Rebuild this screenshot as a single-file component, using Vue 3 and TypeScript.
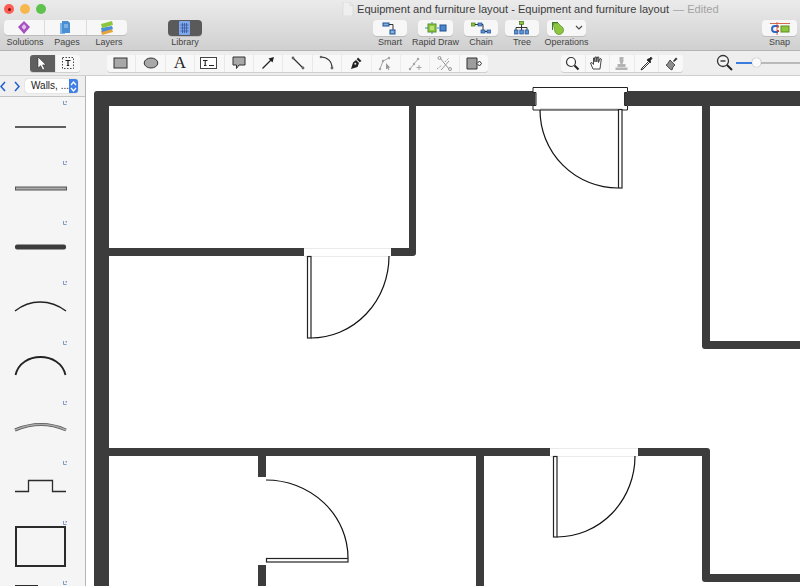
<script setup lang="ts">
const tileIndexes: number[] = [0, 1, 2, 3, 4, 5, 6, 7, 8]
</script>

<template>
  <div class="app">
    <header class="head">
      <div class="lights">
        <span class="light red"><i></i></span>
        <span class="light yellow"></span>
        <span class="light green"></span>
      </div>
      <div class="title">
        <svg class="doc" width="12" height="14" viewBox="0 0 12 14"><path d="M1 0h7l3 3.500V14H1z" fill="#efefef" stroke="#d4d4d4" stroke-width=".6" /><path d="M8 0v3.500h3" fill="none" stroke="#d4d4d4" stroke-width=".6" /></svg>
        <span>Equipment and furniture layout - Equipment and furniture layout</span>
        <span class="edited">— Edited</span>
      </div>
      <div class="tools">
        <div class="seg-wrap">
          <div class="seg">
            <span class="seg-btn">
              <svg width="18" height="14" viewBox="0 0 18 14"><path d="M9 0l6 6-6 7-6-7z" fill="#a64fc0" /><path d="M9 3l2.500 3-2.500 3-2.500-3z" fill="#e3c4ec" /></svg>
            </span>
            <span class="seg-btn">
              <svg width="16" height="16" viewBox="0 0 16 16"><path d="M3 3h5v11H3z" fill="#7eb6e8" /><path d="M5 1h6l2 2v10H5z" fill="#4a8fd4" /><path d="M7 5h4M7 7h4" stroke="#cfe4f7" stroke-width=".8" /></svg>
            </span>
            <span class="seg-btn">
              <svg width="18" height="16" viewBox="0 0 18 16"><path d="M3 11l11-2 1 3-11 3z" fill="#e8a33b" /><path d="M3 8l11-2 1 3-11 3z" fill="#4c8fd8" /><path d="M3 4l11-3 1 4-11 3z" fill="#8cc63f" /></svg>
            </span>
          </div>
          <div class="seg-labels"><span>Solutions</span><span>Pages</span><span>Layers</span></div>
        </div>

        <div class="tool library">
          <span class="btn dark">
            <svg width="12" height="14" viewBox="0 0 12 14"><rect width="11" height="14" rx="1" fill="#7fa8ec" /><path d="M1.500 4h8M1.500 7h8M1.500 10h8M3.500 2v10M5.500 2v10M7.500 2v10" stroke="#3e5fa6" stroke-width=".9" /></svg>
          </span>
          <label>Library</label>
        </div>

        <div class="tool smart">
          <span class="btn">
            <svg width="16" height="13" viewBox="0 0 16 13"><rect x="1" y="1" width="6" height="3" fill="#7fb2e0" stroke="#1f4f8f" /><path d="M7 2.500h4v6" fill="none" stroke="#333" /><rect x="8" y="8" width="5" height="4" fill="#7fb2e0" stroke="#1f4f8f" /></svg>
          </span>
          <label>Smart</label>
        </div>
        <div class="tool rapid">
          <span class="btn">
            <svg width="22" height="12" viewBox="0 0 22 12"><path d="M0 6h3M12 6h2" stroke="#2e8bc9" /><rect x="3" y="2" width="8" height="8" fill="#8cc63f" stroke="#5c8f22" /><rect x="5" y="4" width="4" height="4" fill="#b9e07a" /><path d="M7 0v2M7 10v2" stroke="#2e8bc9" /><rect x="15" y="3" width="6" height="6" fill="#4a86d0" stroke="#1f4f8f" /></svg>
          </span>
          <label>Rapid Draw</label>
        </div>
        <div class="tool chain">
          <span class="btn">
            <svg width="20" height="13" viewBox="0 0 20 13"><rect x="0" y="1" width="4" height="3" fill="#8cc63f" stroke="#44701a" stroke-width=".7" /><path d="M4 2.500h4M10 2.500h2v7" fill="none" stroke="#333" /><rect x="7" y="1" width="4" height="3" fill="#5b93d8" stroke="#1f4f8f" stroke-width=".7" /><rect x="10" y="8" width="4" height="3" fill="#5b93d8" stroke="#1f4f8f" stroke-width=".7" /><path d="M14 9.500h2" stroke="#333" /><rect x="16" y="8" width="4" height="3" fill="#5b93d8" stroke="#1f4f8f" stroke-width=".7" /></svg>
          </span>
          <label>Chain</label>
        </div>
        <div class="tool tree">
          <span class="btn">
            <svg width="16" height="14" viewBox="0 0 16 14"><rect x="5.500" y="0.500" width="4" height="3" fill="#8cc63f" stroke="#44701a" stroke-width=".7" /><path d="M7.500 3.500v3M2 9V6.500h11V9M7.500 6.500V9" fill="none" stroke="#333" /><rect x="0.500" y="9" width="3.500" height="4" fill="#5b93d8" stroke="#1f4f8f" stroke-width=".7" /><rect x="5.800" y="9" width="3.500" height="4" fill="#5b93d8" stroke="#1f4f8f" stroke-width=".7" /><rect x="11" y="9" width="3.500" height="4" fill="#5b93d8" stroke="#1f4f8f" stroke-width=".7" /></svg>
          </span>
          <label>Tree</label>
        </div>
        <div class="tool ops">
          <span class="btn">
            <svg width="34" height="14" viewBox="0 0 34 14"><path d="M2 1h6v3H3v5H2z" fill="#3d7a2c" /><path d="M3 2h5l3 3a4.500 4.500 0 1 1-6 6z" fill="#8cc63f" stroke="#4f7f22" stroke-width=".6" /><path d="M26 5l3 3 3-3" fill="none" stroke="#444" stroke-width="1.100" /></svg>
          </span>
          <label>Operations</label>
        </div>
        <div class="tool snap">
          <span class="btn">
            <svg width="20" height="13" viewBox="0 0 20 13"><path d="M0 1.500h20" stroke="#d9654a" /><path d="M7 0v13" stroke="#d9654a" /><path d="M8 4H5a2.500 2.500 0 0 0 0 6h3" fill="none" stroke="#2f68c4" stroke-width="2" /><path d="M8 3.500v2M8 8v2" stroke="#d43b2b" stroke-width="2" /><rect x="11" y="4" width="8" height="6" fill="#8cc63f" stroke="#5c8f22" /></svg>
          </span>
          <label>Snap</label>
        </div>
      </div>
    </header>

    <div class="bar">
      <div class="group select">
        <span class="cell on">
          <svg width="12" height="15" viewBox="0 0 12 15"><path d="M2 1v11l2.700-2.300 2.100 4.300 1.900-.9-2.100-4.200H10z" fill="#fff" stroke="#222" stroke-width=".5" /></svg>
        </span>
        <span class="cell">
          <svg width="14" height="14" viewBox="0 0 14 14"><rect x="1.500" y="1.500" width="11" height="11" fill="none" stroke="#444" stroke-dasharray="1.500 1.500" /><path d="M4.500 4.500h5M7 4.500v5M5.800 9.500h2.400" fill="none" stroke="#222" stroke-width="1.200" /></svg>
        </span>
      </div>

      <div class="group shapes">
        <span class="cell"><svg width="16" height="12" viewBox="0 0 16 12"><rect x="1" y="1" width="13" height="10" fill="#a8a8a8" stroke="#333" /></svg></span>
        <span class="cell"><svg width="16" height="12" viewBox="0 0 16 12"><ellipse cx="8" cy="6" rx="6.800" ry="5" fill="#a8a8a8" stroke="#333" /></svg></span>
        <span class="cell letter">A</span>
        <span class="cell"><svg width="18" height="12" viewBox="0 0 18 12"><rect x=".5" y=".5" width="16" height="11" fill="#fff" stroke="#444" /><path d="M3 3.500h4.500M5.200 3.500v5M4 8.500h2.500M9 8.500h5" fill="none" stroke="#222" stroke-width="1.100" /></svg></span>
        <span class="cell"><svg width="14" height="14" viewBox="0 0 14 14"><path d="M1 1h12v8H7l-2.500 3.500V9H1z" fill="#a8a8a8" stroke="#333" /></svg></span>
        <span class="cell"><svg width="14" height="14" viewBox="0 0 14 14"><path d="M1.500 12.500L11 3" stroke="#222" stroke-width="1.300" /><path d="M13 1l-1.500 5.500L7.500 2.500z" fill="#222" /></svg></span>
        <span class="cell"><svg width="14" height="14" viewBox="0 0 14 14"><path d="M2 2l10 10" stroke="#333" stroke-width="1.200" /><circle cx="2" cy="2" r="1.400" fill="#666" /><circle cx="12" cy="12" r="1.400" fill="#666" /></svg></span>
        <span class="cell"><svg width="16" height="16" viewBox="0 0 16 16"><path d="M2 2c6 0 11 4 11 11" fill="none" stroke="#333" stroke-width="1.200" /><circle cx="2" cy="2" r="1.300" fill="#666" /><circle cx="13" cy="13" r="1.400" fill="#666" /></svg></span>
        <span class="cell"><svg width="14" height="14" viewBox="0 0 14 14"><path d="M9 1.500l3.500 3.500-1.800 1.300L7.700 3.300z" fill="#222" /><path d="M7 4l3 3-1.500 4L2 13l2-6.500z" fill="#222" /><circle cx="6.300" cy="7.700" r="1" fill="#eee" /></svg></span>
        <span class="cell faded"><svg width="15" height="15" viewBox="0 0 15 15"><path d="M2 13L5 5l6-3" fill="none" stroke="#888" /><circle cx="2" cy="13" r="1.200" fill="#888" /><circle cx="5" cy="5" r="1.200" fill="#888" /><circle cx="11" cy="2" r="1.200" fill="#888" /><path d="M8 7v6.500l1.500-1.300 1 2 .9-.4-1-2h2z" fill="#777" /></svg></span>
        <span class="cell faded"><svg width="15" height="15" viewBox="0 0 15 15"><path d="M2 13L10 3" stroke="#888" /><circle cx="2" cy="13" r="1.200" fill="#888" /><circle cx="6" cy="8" r="1.200" fill="#888" /><circle cx="10" cy="3" r="1.200" fill="#888" /><path d="M11 9v5M8.500 11.500h5" stroke="#888" /></svg></span>
        <span class="cell faded"><svg width="17" height="15" viewBox="0 0 17 15"><path d="M1 13l5-4M9 6l4-4" stroke="#888" stroke-dasharray="2 1" /><path d="M4 2l9 11M13 5L5 14" stroke="#777" /><circle cx="3.500" cy="2" r="1.500" fill="none" stroke="#777" /><circle cx="14" cy="13" r="1.500" fill="none" stroke="#777" /></svg></span>
        <span class="cell"><svg width="16" height="13" viewBox="0 0 16 13"><path d="M1 1h10v11H1z" fill="#9d9d9d" stroke="#333" /><path d="M11 6.500l2.500-2.500 2 2.500-2 2.500z" fill="#f2f2f2" stroke="#333" /></svg></span>
      </div>

      <div class="group view">
        <span class="cell"><svg width="15" height="15" viewBox="0 0 15 15"><circle cx="6" cy="6" r="4.500" fill="#fff" stroke="#333" stroke-width="1.200" /><path d="M9.500 9.500l4 4" stroke="#222" stroke-width="2" /></svg></span>
        <span class="cell"><svg width="16" height="16" viewBox="0 0 16 16"><path d="M4 14L1.500 8l1.500-.5 1.500 2V3l1 0 .5 4V2h1.500l.3 5 .7-5h1.300l-.3 5.500L11 3.500l1.300.5-.8 6L11 14z" fill="#fff" stroke="#333" stroke-width=".9" /></svg></span>
        <span class="cell faded"><svg width="15" height="15" viewBox="0 0 15 15"><path d="M5.500 1h4v4l-1 3h3v3h-8V8h3l-1-3z" fill="#9d9d9d" /><rect x="1.500" y="11.500" width="12" height="2.500" fill="#9d9d9d" /></svg></span>
        <span class="cell"><svg width="15" height="15" viewBox="0 0 15 15"><path d="M9 6L3 12l-1 2 2-1 6-6" fill="#eee" stroke="#333" /><path d="M8 4l3 3 1-1-1-1 2-2.500L12 1 10 3 9 2.800z" fill="#222" stroke="#222" stroke-width=".7" /></svg></span>
        <span class="cell"><svg width="15" height="15" viewBox="0 0 15 15"><path d="M9 5l3-3.500 1.500 1.500L10 6z" fill="#333" /><path d="M6 4l5 5-2 2-1 3-2-1-4-4 2-1.500L4 7z" fill="#8d8d8d" stroke="#222" stroke-width=".7" /></svg></span>
      </div>

      <div class="zoom">
        <svg width="18" height="18" viewBox="0 0 18 18"><circle cx="7" cy="7" r="5.500" fill="#f4f4f4" stroke="#333" stroke-width="1.300" /><path d="M4.500 7h5" stroke="#222" stroke-width="1.300" /><path d="M11 11l5 5" stroke="#222" stroke-width="2" /></svg>
        <div class="slider"><span class="fill"></span><span class="knob"></span></div>
      </div>
    </div>

    <div class="body">
      <aside class="side">
        <div class="side-head">
          <svg class="nav" width="22" height="11" viewBox="0 0 22 11"><path d="M5 1L1 5.500 5 10M15 1l4 4.500L15 10" fill="none" stroke="#1f5fd0" stroke-width="1.500" /></svg>
          <div class="picker">
            <span class="picker-text">Walls, ...</span>
            <span class="stepper"><svg width="7" height="11" viewBox="0 0 7 11"><path d="M1 4l2.500-3L6 4M1 7l2.500 3L6 7" fill="none" stroke="#fff" stroke-width="1.200" /></svg></span>
          </div>
        </div>
        <div class="lib">
          <div v-for="n in tileIndexes" :key="n" class="tile">
            <svg width="85" height="60" viewBox="0 0 85 60">
              <path d="M63.500 4v3.500h3" fill="none" stroke="#7f9cc4" stroke-width="1" />
              <rect x="65.500" y="4" width="1.500" height="1.500" fill="#7f9cc4" />
              <path v-if="n === 0" d="M15 30h51" stroke="#2b2b2b" stroke-width="1.500" />
              <rect v-else-if="n === 1" x="15.500" y="30" width="51" height="3" fill="#aaa" stroke="#555" />
              <rect v-else-if="n === 2" x="15" y="27.500" width="51" height="5" rx="2" fill="#3c3c3c" />
              <path v-else-if="n === 3" d="M15 34C30 22 50 22 66 34" fill="none" stroke="#222" stroke-width="1.500" />
              <path v-else-if="n === 4" d="M15.500 38C21 14 60 14 65.500 38" fill="none" stroke="#222" stroke-width="1.800" />
              <g v-else-if="n === 5">
                <path d="M15 33C32 26 50 26 66 33" fill="none" stroke="#555" stroke-width="3" />
                <path d="M15 33C32 26 50 26 66 33" fill="none" stroke="#aaa" stroke-width="1.500" />
              </g>
              <path v-else-if="n === 6" d="M15 34.500h13.500V23.500h24v11h13.500" fill="none" stroke="#2b2b2b" stroke-width="1.300" />
              <rect v-else-if="n === 7" x="16" y="10" width="49" height="39" fill="none" stroke="#2b2b2b" stroke-width="2" />
              <rect v-else x="15" y="8" width="23" height="10" fill="#2b2b2b" />
            </svg>
          </div>
        </div>
      </aside>

      <main class="canvas">
        <svg class="plan" width="714" height="510" viewBox="86 76 714 510">
          <g fill="#3c3c3c">
            <path d="M97 91H534V106H109V586H94V94a3 3 0 0 1 3-3z" />
            <rect x="628" y="91" width="172" height="15" />
            <path d="M409 106h7v147a3 3 0 0 1-3 3h-22v-8h18z" />
            <rect x="109" y="248" width="195" height="8" />
            <path d="M702 106h8v235h90v8h-95a3 3 0 0 1-3-3z" />
            <rect x="109" y="448" width="441" height="8" />
            <path d="M638 448h69a3 3 0 0 1 3 3v123h90v8h-95a3 3 0 0 1-3-3V456h-64z" />
            <rect x="476" y="456" width="8" height="130" />
            <rect x="258" y="456" width="8" height="21" />
            <rect x="258" y="565" width="8" height="21" />
          </g>

          <path d="M533 87.500h94.500v5h-3v13h3v4.500H533v-4.500h3v-13h-3z" fill="#fff" stroke="#222" stroke-width="1" />
          <path d="M540 109.500h78" stroke="#777" stroke-width="1.500" />
          <rect x="532" y="93" width="3.500" height="12" fill="#3c3c3c" />
          <rect x="624.500" y="93" width="3.500" height="12" fill="#3c3c3c" />
          <path d="M540 110a78 78 0 0 0 78 78" fill="none" stroke="#111" stroke-width="1.200" />
          <rect x="618.500" y="109.500" width="3.500" height="78.500" fill="#fff" stroke="#222" stroke-width="1.200" />

          <path d="M304 248.500h87M304 256.500h87" stroke="#eaeaea" />
          <rect x="307.500" y="256.500" width="3.500" height="81.500" fill="#fff" stroke="#222" stroke-width="1.200" />
          <path d="M311 338a78 82 0 0 0 78-82" fill="none" stroke="#111" stroke-width="1.200" />

          <path d="M550 448.500h88M550 456.500h88" stroke="#eaeaea" />
          <rect x="553.500" y="456.500" width="3.500" height="80.500" fill="#fff" stroke="#222" stroke-width="1.200" />
          <path d="M557 537a78 81 0 0 0 78-81" fill="none" stroke="#111" stroke-width="1.200" />

          <path d="M266 480a82 78 0 0 1 82 78" fill="none" stroke="#111" stroke-width="1.200" />
          <rect x="266.500" y="558.500" width="81.500" height="3.500" fill="#fff" stroke="#222" stroke-width="1.200" />
        </svg>
      </main>
    </div>
  </div>
</template>

<style scoped>
.app {
  width: 800px;
  height: 586px;
  overflow: hidden;
  display: flex;
  flex-direction: column;
  background: #fff;
  font-family: "Liberation Sans", Arial, sans-serif;
  color: #444;
}
.head {
  height: 51px;
  box-sizing: border-box;
  flex: none;
  position: relative;
  background: linear-gradient(#ebebeb, #d0d0d0);
  border-bottom: 1px solid #b4b4b4;
}
.lights {
  position: absolute;
  left: 4px;
  top: 4px;
  display: flex;
  gap: 6px;
}
.light {
  width: 10px;
  height: 10px;
  border-radius: 50%;
  display: flex;
  align-items: center;
  justify-content: center;
}
.light i {
  width: 3px;
  height: 3px;
  border-radius: 50%;
  background: #7a120c;
}
.red { background: #fc5d55; }
.yellow { background: #f6b84c; }
.green { background: #5fc24f; }
.title {
  height: 18px;
  padding-left: 342px;
  display: flex;
  align-items: center;
  font-size: 11.100px;
  color: #3c3c3c;
  white-space: nowrap;
}
.doc { margin-right: 3px; }
.edited {
  margin-left: 4px;
  color: #a3a3a3;
}
.tools {
  display: flex;
  padding-left: 4px;
  padding-top: 2px;
  align-items: flex-start;
}
.seg-wrap { width: 123px; }
.seg {
  display: flex;
  height: 15px;
  border-radius: 4px;
  background: #f7f7f7;
  box-shadow: 0 1px 0 #bdbdbd;
}
.seg-btn {
  flex: 1;
  display: flex;
  align-items: center;
  justify-content: center;
  border-left: 1px solid #dcdcdc;
}
.seg-btn:first-child { border-left: 0; }
.seg-labels {
  display: flex;
  margin-top: 2px;
  margin-right: -3px;
  font-size: 9px;
  line-height: 11px;
}
.seg-labels span {
  flex: 1;
  text-align: center;
}
.tool {
  display: flex;
  flex-direction: column;
  align-items: center;
  width: 34px;
}
.tool label {
  margin-top: 1px;
  font-size: 9px;
  line-height: 11px;
  white-space: nowrap;
}
.btn {
  width: 100%;
  height: 16px;
  border-radius: 4px;
  background: #f7f7f7;
  box-shadow: 0 1px 0 #bdbdbd;
  display: flex;
  align-items: center;
  justify-content: center;
}
.btn.dark { background: #5a5a5a; }
.library { margin-left: 41px; }
.smart { margin-left: 171px; }
.rapid { margin-left: 11px; width: 35px; }
.chain { margin-left: 11px; }
.tree { margin-left: 7px; }
.ops { margin-left: 8px; width: 39px; }
.snap { margin-left: 176px; width: 35px; }

.bar {
  height: 25px;
  flex: none;
  box-sizing: border-box;
  background: #eeeeee;
  border-bottom: 1px solid #cfcfcf;
  display: flex;
  align-items: center;
  padding-left: 30px;
}
.group {
  display: flex;
  height: 17px;
  border-radius: 3px;
  background: #f8f8f8;
  box-shadow: 0 1px 0 #d0d0d0;
}
.cell {
  flex: 1;
  display: flex;
  align-items: center;
  justify-content: center;
  border-left: 1px solid #e8e8e8;
  min-width: 0;
}
.cell:first-child { border-left: 0; }
.cell.on {
  background: #5f5f5f;
  border-radius: 3px 0 0 3px;
}
.faded { opacity: .75; }
.letter {
  font-family: "Liberation Serif", serif;
  font-size: 17px;
  color: #222;
}
.select { width: 50px; }
.shapes { width: 381px; margin-left: 27px; }
.view { width: 122px; margin-left: 73px; }
.zoom {
  margin-left: 33px;
  display: flex;
  align-items: center;
  gap: 2px;
  flex: 1;
}
.slider {
  flex: 1;
  height: 2px;
  background: #b9b9b9;
  position: relative;
}
.fill {
  position: absolute;
  left: 0;
  top: 0;
  bottom: 0;
  width: 20px;
  background: #3a7bde;
}
.knob {
  position: absolute;
  left: 16px;
  top: -4px;
  width: 9px;
  height: 9px;
  border-radius: 50%;
  background: #fafafa;
  box-shadow: 0 0 1px #777;
}
.body {
  flex: 1;
  min-height: 0;
  display: flex;
}
.side {
  width: 86px;
  flex: none;
  box-sizing: border-box;
  background: #f5f5f5;
  border-right: 1px solid #b5b5b5;
  display: flex;
  flex-direction: column;
  overflow: hidden;
}
.side-head {
  height: 21px;
  flex: none;
  box-sizing: border-box;
  border-bottom: 1px solid #c4c4c4;
  background: #efefef;
  display: flex;
  align-items: center;
}
.nav { margin-right: 3px; flex: none; }
.picker {
  width: 53px;
  height: 14px;
  display: flex;
  border-radius: 3px;
  background: #fff;
  box-shadow: 0 0 1px #999;
}
.picker-text {
  flex: 1;
  font-size: 10px;
  line-height: 14px;
  padding-left: 6px;
  color: #222;
  white-space: nowrap;
}
.stepper {
  width: 11px;
  border-radius: 0 3px 3px 0;
  background: #3f7fe6;
  display: flex;
  align-items: center;
  justify-content: center;
}
.lib { flex: 1; min-height: 0; overflow: hidden; }
.tile { height: 60px; overflow: hidden; }
.tile svg { display: block; overflow: hidden; }
.canvas {
  flex: 1;
  min-width: 0;
  background: #fff;
  overflow: hidden;
}
.plan { display: block; }
</style>

<style>
html, body { margin: 0; background: #fff; }
</style>
